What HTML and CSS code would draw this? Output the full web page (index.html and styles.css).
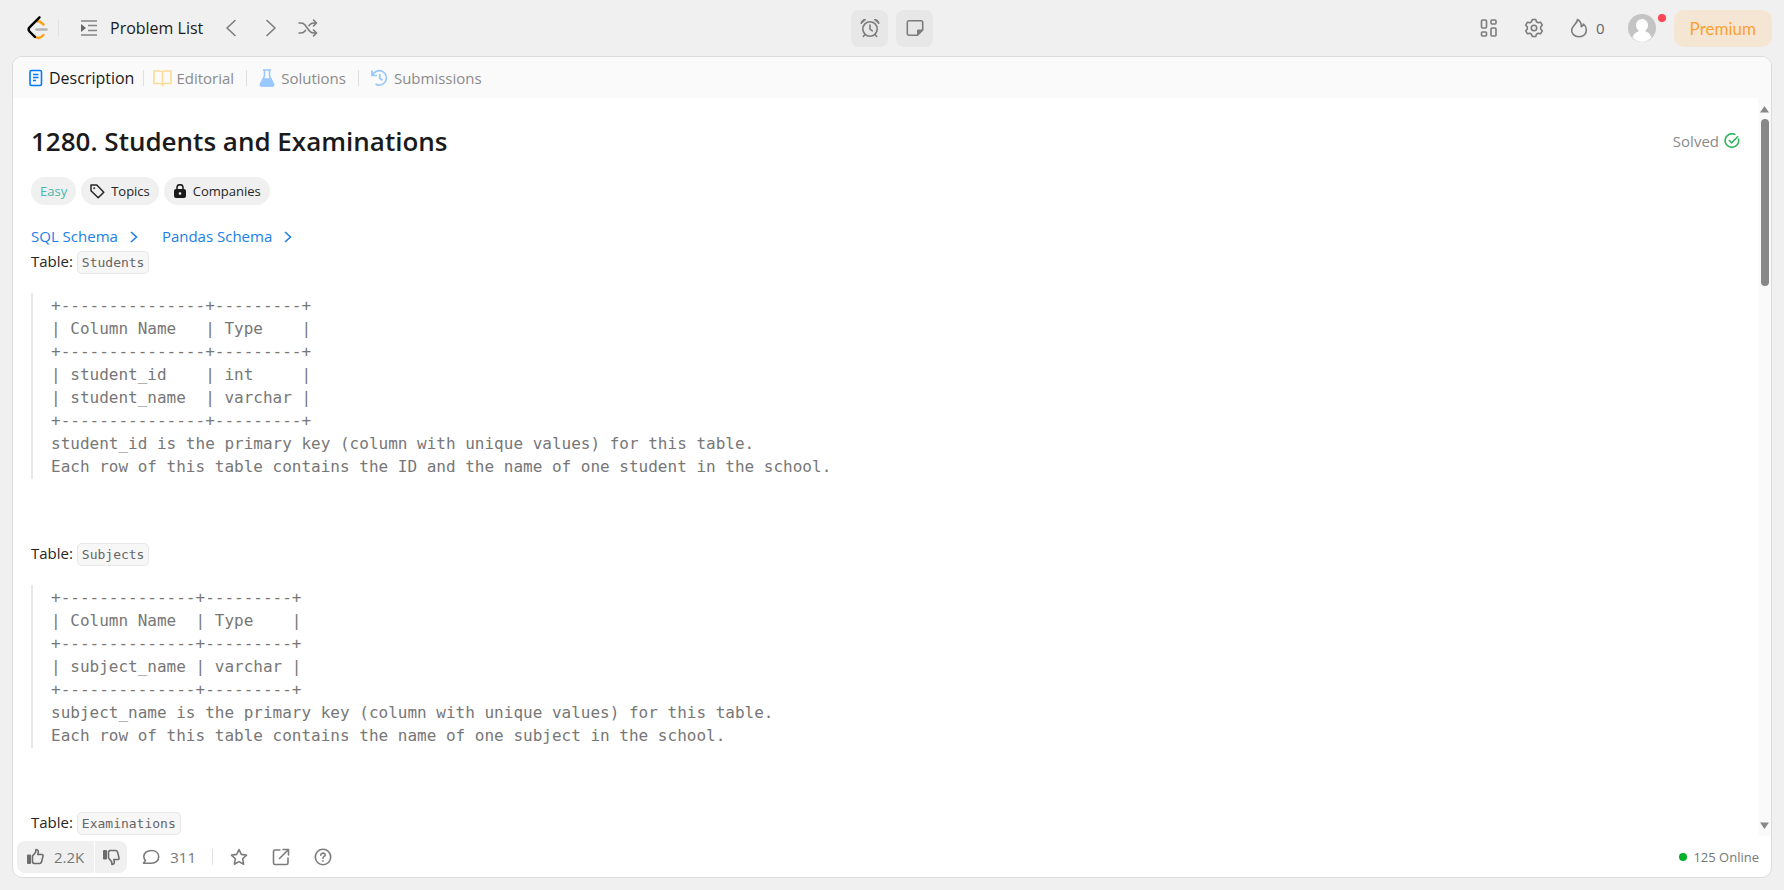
FILE: index.html
```html
<!DOCTYPE html>
<html lang="en">
<head>
  <meta charset="UTF-8" />
  <meta name="viewport" content="width=device-width, initial-scale=1" />
  <title>Students and Examinations</title>
  <link rel="stylesheet" href="styles.css">
</head>
<body>

<header class="topbar">
  <nav class="nav-left">
    <a href="#" class="logo" aria-label="Home">
      <svg width="22" height="26" viewBox="0 0 22 26" fill="none" stroke-width="2.4" stroke-linecap="round">
        <path d="M11.500 6.500c1.500-.8 2.500 0 6 3.200M8.500 21c2.500 3 6 2.500 9-1" stroke="#ffa116" />
        <path d="M10.500 14.500h10" stroke="#b3b3b3" />
        <path d="M13.500 2.300L3.500 12.300c-1.200 1.400-1.200 2.800 0 4.200L9 22" stroke="#000" />
      </svg>
    </a>
    <span class="divider"></span>
    <a href="#" class="problem-list">
      <svg width="18" height="18" viewBox="0 0 18 18" fill="none" stroke="#858585" stroke-width="1.700">
        <path d="M1 2h16M8 6.500h9M8 11.500h9M1 16h16" />
        <path d="M1 5l5 4-5 4z" fill="#666" stroke="none" />
      </svg>
      Problem List
    </a>
    <button class="icon-btn prev" aria-label="Previous">
      <svg width="20" height="20" viewBox="0 0 20 20"><path d="M14 2.500L6 10l8 7.500" /></svg>
    </button>
    <button class="icon-btn next" aria-label="Next">
      <svg width="20" height="20" viewBox="0 0 20 20"><path d="M6 2.500l8 7.500-8 7.500" /></svg>
    </button>
    <button class="icon-btn" aria-label="Random problem">
      <svg width="20" height="20" viewBox="0 0 20 20"><path d="M1 5h2c2 0 3 .7 4 2l4.500 6c1 1.300 2 2 4 2h3M1 15h2c2 0 3-.7 4-2l.5-.7M11 7.700l.5-.7c1-1.300 2-2 4-2h3M15.500 2l3 3-3 3M15.500 12l3 3-3 3" /></svg>
    </button>
  </nav>

  <div class="nav-center">
    <button class="tool-btn" aria-label="Timer">
      <svg width="20" height="20" viewBox="0 0 20 20">
        <circle cx="10" cy="11" r="7.200" />
        <path d="M10 7v4.200l2.300 1.600M5 16.500L3.300 18.500M15 16.500l1.700 2" />
        <path d="M1 5.500C1 3 3 1 5.500 1.500zM19 5.500C19 3 17 1 14.500 1.500z" fill="#7c7c7c" stroke-width="1" />
      </svg>
    </button>
    <button class="tool-btn" aria-label="Notes">
      <svg width="20" height="20" viewBox="0 0 20 20">
        <path d="M12.500 17.200H4a1.700 1.700 0 0 1-1.700-1.700v-11A1.700 1.700 0 0 1 4 2.800h12a1.700 1.700 0 0 1 1.700 1.700V12z" />
        <path d="M12.500 17v-5h5z" fill="#7c7c7c" stroke-width="1" />
      </svg>
    </button>
  </div>

  <div class="nav-right">
    <button class="icon-btn" aria-label="Layouts">
      <svg width="20" height="20" viewBox="0 0 20 20">
        <rect x="2.500" y="2" width="5" height="8" rx="1" /><rect x="12" y="2" width="5" height="4" rx="1" />
        <rect x="2.500" y="14" width="5" height="4" rx="1" /><rect x="12" y="10" width="5" height="8" rx="1" />
      </svg>
    </button>
    <button class="icon-btn" aria-label="Settings">
      <svg width="20" height="20" viewBox="0 0 20 20">
        <path d="M8.300 1.500h3.400l.8 2.300 1.600.9 2.400-.5 1.800 2.900L16.700 9v2l1.600 1.900-1.800 2.900-2.400-.5-1.600.9-.8 2.300H8.300l-.8-2.300-1.600-.9-2.400.5-1.800-2.900L3.300 11V9L1.700 7.100l1.800-2.900 2.400.5 1.600-.9z" />
        <circle cx="10" cy="10" r="2.700" />
      </svg>
    </button>
    <a href="#" class="streak">
      <svg width="20" height="20" viewBox="0 0 20 20"><path d="M8.500 1.500c.3 3-4.800 5.800-5.800 10-.7 4 2.700 7.300 7.300 7.300 4.500 0 7.700-3 7.300-7.300-.2-2.300-1.300-4.300-2.800-5.500-.3 1.300-1 2.200-2.200 2.700C12.500 5.500 11.300 3 8.500 1.500z" /></svg>
      0
    </a>
    <button class="avatar" aria-label="Profile">
      <svg width="28" height="28" viewBox="0 0 28 28">
        <circle cx="14" cy="14" r="14" fill="#c4c4c4" />
        <path d="M14 5a6 6 0 0 1 6 6c0 2.500-1 4.500-2.500 5.500v1c3 .8 5 2.500 6 6A14 14 0 0 1 14 28a14 14 0 0 1-9.500-4.500c1-3.500 3-5.200 6-6v-1C9 15.500 8 13.500 8 11a6 6 0 0 1 6-6z" fill="#fff" />
      </svg>
      <span class="badge"></span>
    </button>
    <a href="#" class="premium">Premium</a>
  </div>
</header>

<main class="panel">
  <nav class="tabs">
    <a href="#" class="tab active">
      <svg width="14" height="18" viewBox="0 0 14 18" fill="none" stroke="#007aff" stroke-width="1.600">
        <rect x="1" y="1.500" width="11.500" height="15" rx="1.500" /><path d="M4 5.500h5.500M4 8.500h5.500M4 11.500h3" stroke-width="1.300" />
      </svg>
      Description
    </a>
    <span class="divider"></span>
    <a href="#" class="tab editorial">
      <svg width="19" height="18" viewBox="0 0 19 18" fill="none" stroke="#fbdc98" stroke-width="1.700">
        <path d="M9.500 3.500C9 2.300 8 2 7 2H1v12.500h6c1 0 2 .5 2.500 1.500.5-1 1.500-1.500 2.500-1.500h6V2h-6c-1 0-2 .3-2.500 1.500zV16" />
      </svg>
      Editorial
    </a>
    <span class="divider"></span>
    <a href="#" class="tab">
      <svg width="16" height="18" viewBox="0 0 16 18" fill="none" stroke="#99c8ff" stroke-width="1.600">
        <path d="M4 1h8M5.500 1v6L1.500 15c-.4 1 .2 2 1.200 2h10.600c1 0 1.600-1 1.200-2l-4-8V1" />
        <path d="M4.500 10h7l3 6-1 1H2.500l-1-1z" fill="#99c8ff" />
      </svg>
      Solutions
    </a>
    <span class="divider"></span>
    <a href="#" class="tab">
      <svg width="17" height="18" viewBox="0 0 17 18" fill="none" stroke="#99c8ff" stroke-width="1.700">
        <path d="M1 1.500v5h5M1.500 6.300A7.200 7.200 0 1 1 4.500 15M8.800 5v4.300l2.700 2" />
      </svg>
      Submissions
    </a>
  </nav>

  <div class="scroll-area">
    <article class="content">
      <div class="title-row">
        <h1>1280. Students and Examinations</h1>
        <div class="solved">
          Solved
          <svg width="16" height="16" viewBox="0 0 16 16" fill="none" stroke="#2db55d" stroke-width="1.600" stroke-linecap="round">
            <path d="M10.800 1.400A6.800 6.800 0 1 0 14.500 6M5.300 7.500l2.300 2.300 6-6" />
          </svg>
        </div>
      </div>

      <div class="chips">
        <span class="chip easy">Easy</span>
        <button class="chip">
          <svg width="15" height="15" viewBox="0 0 15 15" fill="none" stroke="#262626" stroke-width="1.500" stroke-linejoin="round">
            <path d="M1 1h5.800l7 7.200-5.600 5.600L1 6.700z" /><circle cx="4.200" cy="4.200" r=".6" fill="#262626" stroke-width=".8" />
          </svg>
          Topics
        </button>
        <button class="chip">
          <svg width="14" height="14" viewBox="0 0 14 14" fill="none">
            <rect x="1" y="5" width="12" height="9" rx="2" fill="#1a1a1a" />
            <path d="M4 6V3.700a3 3 0 0 1 6 0V6" stroke="#1a1a1a" stroke-width="1.500" /><circle cx="7" cy="9.500" r="1.300" fill="#fff" />
          </svg>
          Companies
        </button>
      </div>

      <div class="schemas">
        <a href="#">SQL Schema <svg width="8" height="14" viewBox="0 0 8 14"><path d="M1 2l5.500 5L1 12" /></svg></a>
        <a href="#">Pandas Schema <svg width="8" height="14" viewBox="0 0 8 14"><path d="M1 2l5.500 5L1 12" /></svg></a>
      </div>

      <p class="table-name">Table: <code>Students</code></p>
<pre>
+---------------+---------+
| Column Name   | Type    |
+---------------+---------+
| student_id    | int     |
| student_name  | varchar |
+---------------+---------+
student_id is the primary key (column with unique values) for this table.
Each row of this table contains the ID and the name of one student in the school.
</pre>

      <p class="table-name">Table: <code>Subjects</code></p>
<pre>
+--------------+---------+
| Column Name  | Type    |
+--------------+---------+
| subject_name | varchar |
+--------------+---------+
subject_name is the primary key (column with unique values) for this table.
Each row of this table contains the name of one subject in the school.
</pre>

      <p class="table-name">Table: <code>Examinations</code></p>
    </article>

    <div class="scrollbar">
      <svg width="9" height="7" viewBox="0 0 9 7"><path d="M4.500 0L9 6.500H0z" fill="#888" /></svg>
      <div class="track"><div class="thumb"></div></div>
      <svg width="9" height="7" viewBox="0 0 9 7"><path d="M4.500 7L9 .5H0z" fill="#888" /></svg>
    </div>
  </div>

  <footer class="actions">
    <div class="votes">
      <button class="vote up">
        <svg width="18" height="18" viewBox="0 0 18 18" fill="none" stroke="#6c6c6c" stroke-width="1.600" stroke-linejoin="round">
          <rect x="1" y="6.500" width="4" height="9.500" rx="1" fill="#6c6c6c" stroke="none" />
          <path d="M6.500 8l3-3.500.5-3c2.500 0 2.800 2 1.800 5H16c1 0 1.200.8 1 1.600l-1.500 6c-.3 1-.8 1.400-1.800 1.400H8l-1.500-1z" />
        </svg>
        2.2K
      </button>
      <button class="vote down" aria-label="Dislike">
        <svg width="18" height="18" viewBox="0 0 18 18" fill="none" stroke="#6c6c6c" stroke-width="1.600" stroke-linejoin="round">
          <rect x="1" y="2" width="4" height="9.500" rx="1" fill="#6c6c6c" stroke="none" />
          <path d="M6.500 10l3 3.500.5 3c2.500 0 2.800-2 1.800-5H16c1 0 1.200-.8 1-1.600l-1.500-6c-.3-1-.8-1.400-1.800-1.400H8l-1.500 1z" />
        </svg>
      </button>
    </div>
    <button class="comments">
      <svg width="18" height="18" viewBox="0 0 18 18"><path d="M9.500 2.500C5 2.500 1.800 5 1.800 8.600c0 1.600.7 2.800 1.600 3.900L1.500 15.200h8c4.300 0 7.200-2.800 7.200-6.400S13.800 2.500 9.500 2.500z" /></svg>
      311
    </button>
    <span class="divider"></span>
    <div class="links">
      <button class="icon-btn" aria-label="Favorite">
        <svg width="18" height="18" viewBox="0 0 18 18"><path d="M9 1.500l2.300 4.900 5.200.7-3.800 3.700.9 5.400L9 13.600l-4.600 2.600.9-5.400L1.500 7.100l5.200-.7z" /></svg>
      </button>
      <button class="icon-btn" aria-label="Share">
        <svg width="18" height="18" viewBox="0 0 18 18"><path d="M8 2H3a1.500 1.500 0 0 0-1.500 1.500v11.500A1.500 1.500 0 0 0 3 16.500h11.500A1.500 1.500 0 0 0 16 15v-5M11 1.500h5.500V7M16 2l-8.500 8.500" /></svg>
      </button>
      <button class="icon-btn" aria-label="Help">
        <svg width="18" height="18" viewBox="0 0 18 18"><circle cx="9" cy="9" r="7.700" /><path d="M6.800 7.300c0-3 4.600-2.700 4.400-.2C11 8.500 9 8.500 9 10.300M9 12.700v.4" /></svg>
      </button>
    </div>
    <div class="online"><span class="dot"></span>125 Online</div>
  </footer>
</main>

</body>
</html>
```
FILE: styles.css
```css
* { box-sizing: border-box; }
body {
  display: flex; flex-direction: column; height: 100vh; margin: 0;
  padding: 0 12px 12px; background: #f0f0f0; color: #262626;
  font-family: "Open Sans", "Noto Sans", sans-serif; font-size: 15px;
}
a { color: inherit; text-decoration: none; }
button { padding: 0; border: none; background: none; color: inherit; font: inherit; cursor: pointer; }
svg { display: block; flex: none; }

/* top bar */
.topbar { display: grid; grid-template-columns: 1fr auto 1fr; align-items: center; height: 56px; flex: none; }
.nav-left, .nav-center, .nav-right { display: flex; align-items: center; }
.logo { margin-left: 14px; }
.divider { width: 1px; height: 16px; background: #e0e0e0; }
.nav-left .divider { margin-left: 10px; }
.problem-list {
  display: flex; align-items: center; gap: 12px; margin: 0 18px 0 21px;
  color: #1a1a1a; font-size: 16px; font-weight: 500;
}
.icon-btn svg, .tool-btn svg, .streak svg, .comments svg {
  fill: none; stroke: #7c7c7c; stroke-width: 1.6; stroke-linecap: round; stroke-linejoin: round;
}
.prev { margin-right: 20px; }
.next { margin-right: 17px; }
.nav-center { gap: 8px; }
.tool-btn { display: grid; place-items: center; width: 37px; height: 37px; border-radius: 8px; background: #e7e7e7; }
.nav-right { justify-content: flex-end; }
.nav-right .icon-btn { margin-right: 25px; }
.streak { display: flex; align-items: center; gap: 7px; margin-right: 23px; color: #666; }
.avatar { position: relative; margin-right: 18px; }
.badge { position: absolute; top: 0; right: -10px; width: 8px; height: 8px; border-radius: 50%; background: #ff4554; }
.premium {
  padding: 0 16px; border-radius: 10px; background: #f4e6d2; color: #ffa033;
  font-family: Lato, sans-serif; font-size: 17px; line-height: 37px;
}

/* problem panel */
.panel {
  display: flex; flex-direction: column; flex: 1; min-height: 0; overflow: hidden;
  border: 1px solid #dcdcdc; border-radius: 10px; background: #fff;
}
.tabs { display: flex; align-items: center; height: 41px; flex: none; padding-left: 16px; background: #fafafa; }
.tabs .divider { margin: 0 12px; }
.tabs .active + .divider { margin: 0 9px; }
.tab { display: flex; align-items: center; gap: 6px; color: #8a8a8a; }
.tab.active { color: #1a1a1a; font-size: 16px; font-weight: 500; }
.editorial { gap: 4px; }

.scroll-area { display: flex; flex: 1; min-height: 0; }
.content { flex: 1; overflow: hidden; padding: 27px 18px 0; }
.title-row { display: flex; justify-content: space-between; align-items: center; }
h1 { margin: 0; color: #1a1a1a; font-size: 26px; font-weight: 600; line-height: 32px; }
.solved { display: flex; align-items: center; gap: 5px; color: #8a8a8a; }
.chips { display: flex; gap: 5px; margin-top: 20px; }
.chip {
  display: flex; align-items: center; gap: 6px; height: 28px; padding: 0 9px;
  border-radius: 14px; background: #f0f0f0; font-size: 13px;
}
.easy { color: #46b8ae; }
.schemas { display: flex; gap: 24px; margin-top: 19px; color: #2080e8; line-height: 25px; }
.schemas a { display: flex; align-items: center; gap: 12px; }
.schemas svg { fill: none; stroke: #2080e8; stroke-width: 1.6; }
.table-name { margin: 0 0 20px; line-height: 24px; }
code {
  padding: 3px 4px; border: 1px solid #e8e8e8; border-radius: 5px; background: #f7f7f7;
  color: #666; font-family: "DejaVu Sans Mono", monospace; font-size: 13px; line-height: 1;
}
pre {
  margin: 0 0 62px; padding: 1px 0 1px 18px; border-left: 2px solid #e8e8e8;
  color: #777; font-family: "DejaVu Sans Mono", monospace; font-size: 16px; line-height: 23px;
}

.scrollbar { display: flex; flex-direction: column; align-items: center; gap: 6px; width: 13px; padding: 8px 0 7px; background: #fafafa; }
.track { flex: 1; }
.thumb { width: 8px; height: 24%; border-radius: 4px; background: #888; }

/* bottom bar */
.actions { display: flex; align-items: center; height: 41px; flex: none; padding: 0 12px 0 4px; color: #777; font-weight: 500; }
.votes { display: flex; gap: 1px; }
.vote { display: flex; align-items: center; gap: 10px; height: 32px; padding: 0 10px 0 9px; background: #f0f0f0; }
.up { border-radius: 8px 0 0 8px; }
.down { padding: 0 7px; border-radius: 0 8px 8px 0; }
.comments { display: flex; align-items: center; gap: 10px; margin: 0 16px 0 15px; }
.links { display: flex; gap: 24px; margin-left: 17px; }
.online { display: flex; align-items: center; gap: 6px; margin-left: auto; font-size: 13px; }
.dot { width: 8px; height: 8px; border-radius: 50%; background: #02b128; }
```
